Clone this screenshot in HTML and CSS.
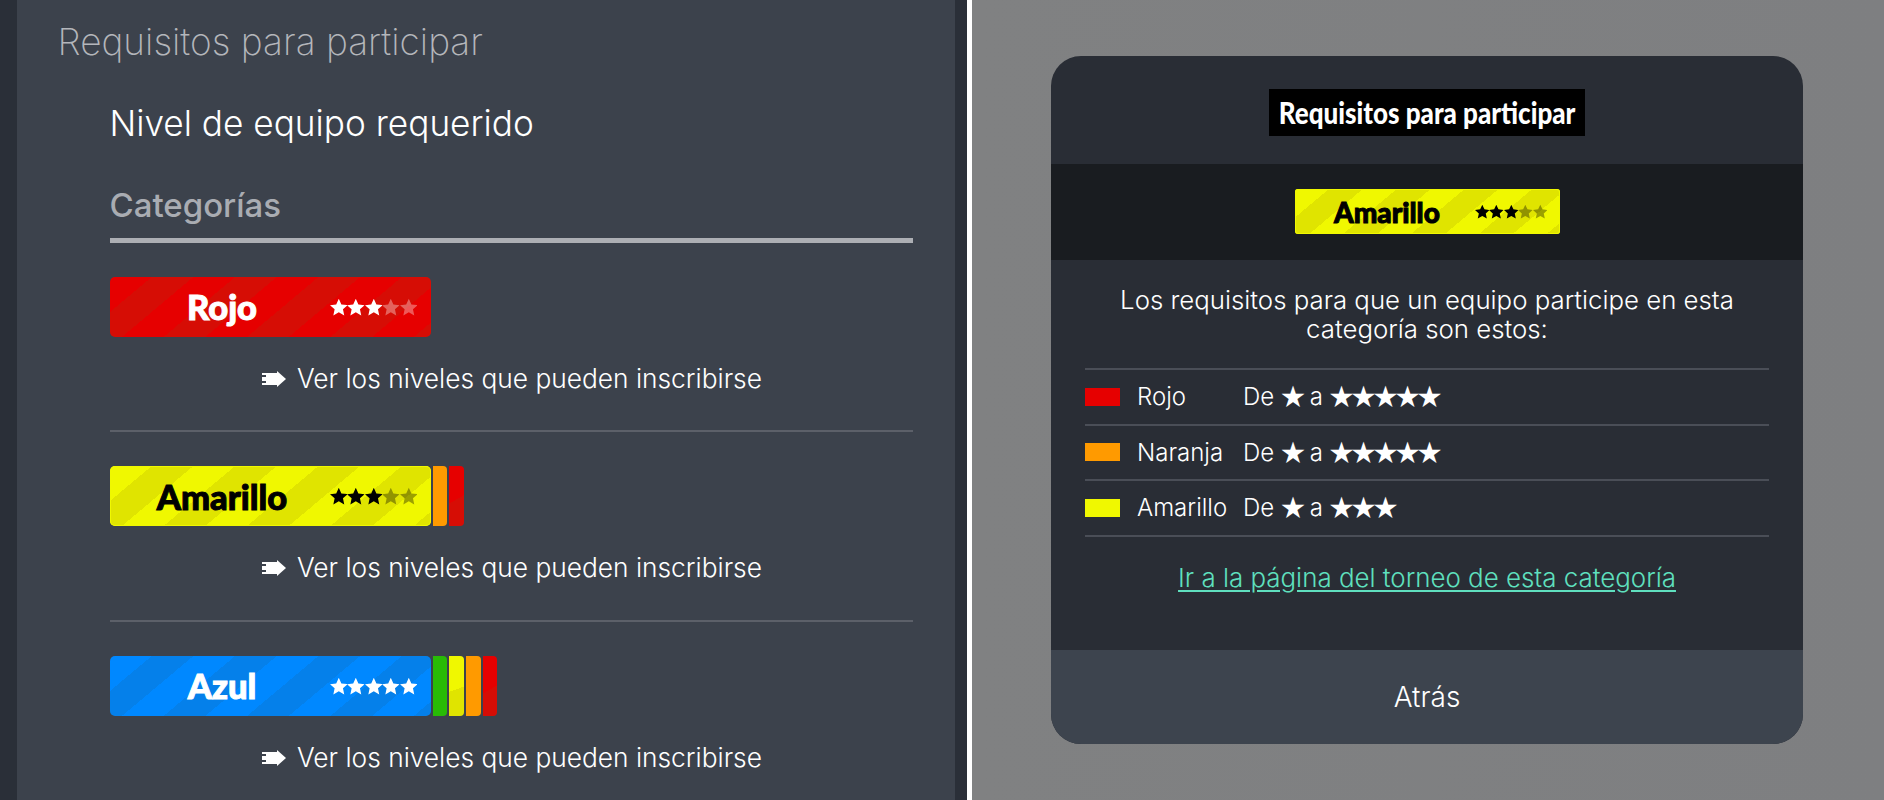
FILE: index.html
```html
<!DOCTYPE html>
<html lang="es">
<head>
<meta charset="utf-8">
<title>Requisitos para participar</title>
<link rel="stylesheet" href="styles.css">
</head>
<body>
<svg class="defs" width="0" height="0" aria-hidden="true">
  <symbol id="star" viewBox="0.5 0 19 19"><path d="M10 .6l2.8 6.1 6.7.8-5 4.5 1.4 6.6L10 15.3l-5.9 3.3 1.4-6.6-5-4.5 6.7-.8z"/></symbol>
  <symbol id="arrow" viewBox="0 0 24 16"><path d="M0 2h15V0l9 8-9 8v-2H0v-2h4v-2H0V6h4V4H0z"/></symbol>
</svg>
<main class="screen">
  <section class="pane">
    <div class="panel">
      <h1 class="page-title">Requisitos para participar</h1>
      <div class="content">
        <h2 class="sub-title">Nivel de equipo requerido</h2>
        <h3 class="cat-title">Categorías</h3>
        <article class="item">
          <div class="badge-row">
            <div class="badge red">
              <span class="badge-name">Rojo</span>
              <span class="stars"><svg><use href="#star"/></svg><svg><use href="#star"/></svg><svg><use href="#star"/></svg><svg class="off"><use href="#star"/></svg><svg class="off"><use href="#star"/></svg></span>
            </div>
          </div>
          <a class="more"><svg class="arrow"><use href="#arrow"/></svg>Ver los niveles que pueden inscribirse</a>
        </article>
        <article class="item">
          <div class="badge-row">
            <div class="badge yellow">
              <span class="badge-name">Amarillo</span>
              <span class="stars"><svg><use href="#star"/></svg><svg><use href="#star"/></svg><svg><use href="#star"/></svg><svg class="off"><use href="#star"/></svg><svg class="off"><use href="#star"/></svg></span>
            </div>
            <i class="stub orange"></i><i class="stub red"></i>
          </div>
          <a class="more"><svg class="arrow"><use href="#arrow"/></svg>Ver los niveles que pueden inscribirse</a>
        </article>
        <article class="item">
          <div class="badge-row">
            <div class="badge blue">
              <span class="badge-name">Azul</span>
              <span class="stars"><svg><use href="#star"/></svg><svg><use href="#star"/></svg><svg><use href="#star"/></svg><svg><use href="#star"/></svg><svg><use href="#star"/></svg></span>
            </div>
            <i class="stub green"></i><i class="stub yellow"></i><i class="stub orange"></i><i class="stub red"></i>
          </div>
          <a class="more"><svg class="arrow"><use href="#arrow"/></svg>Ver los niveles que pueden inscribirse</a>
        </article>
      </div>
    </div>
  </section>
  <section class="overlay">
    <div class="modal">
      <header class="modal-head"><h2 class="modal-title"><span class="title-box"><span class="title-text">Requisitos para participar</span></span></h2></header>
      <div class="modal-band">
        <div class="badge yellow small">
          <span class="badge-name">Amarillo</span>
          <span class="stars"><svg><use href="#star"/></svg><svg><use href="#star"/></svg><svg><use href="#star"/></svg><svg class="off"><use href="#star"/></svg><svg class="off"><use href="#star"/></svg></span>
        </div>
      </div>
      <div class="modal-body">
        <p class="intro">Los requisitos para que un equipo participe en esta<br>categoría son estos:</p>
        <ul class="levels">
          <li><i class="swatch red"></i><span class="lv-name">Rojo</span><span class="lv-range">De <b>★</b> a <b>★★★★★</b></span></li>
          <li><i class="swatch orange"></i><span class="lv-name">Naranja</span><span class="lv-range">De <b>★</b> a <b>★★★★★</b></span></li>
          <li><i class="swatch yellow"></i><span class="lv-name">Amarillo</span><span class="lv-range">De <b>★</b> a <b>★★★</b></span></li>
        </ul>
        <a class="link">Ir a la página del torneo de esta categoría</a>
      </div>
      <footer class="modal-foot">Atrás</footer>
    </div>
  </section>
</main>
</body>
</html>
```
FILE: styles.css
```css
* { box-sizing: border-box; }
html, body { margin: 0; height: 800px; overflow: hidden; }
body { background: #2a2f38; color: #fff; font-family: Inter, "Noto Sans", sans-serif; font-weight: 300; }
h1, h2, h3, p, ul { margin: 0; padding: 0; font-weight: inherit; }
.defs { position: absolute; }
.screen { display: flex; height: 800px; }

.pane { width: 972px; flex: none; padding: 0 12px 0 17px; border-right: 5px solid #fff; }
.panel { background: #3c424c; height: 800px; padding-top: 18px; }
.page-title { padding-left: 40.5px; font-size: 37px; line-height: 48px; font-weight: 200; color: #b4b6bb; }
.content { padding: 0 42px 0 92.5px; }
.sub-title { margin-top: 32px; font-size: 35.2px; line-height: 50px; }
.cat-title { margin-top: 37px; padding-bottom: 13px; border-bottom: 5px solid #adafb4; font-size: 33px; line-height: 40px; font-weight: 500; color: #a9acb2; }

.item { padding: 34px 0 31.7px; border-bottom: 2px solid #5c6069; }
.item:first-of-type { padding-top: 33.5px; }
.badge-row { display: flex; }
.more { display: flex; align-items: center; gap: 11px; margin: 22px 0 0 152.5px; font-size: 26.3px; line-height: 40px; }
.arrow { width: 24px; height: 16px; fill: #fff; }

.badge { display: flex; align-items: center; width: 321px; height: 60px; border-radius: 5px; --light: #fff; --dark: #fff; --w: 26.8px; background: repeating-linear-gradient(140deg, var(--light) 0 var(--w), var(--dark) var(--w) calc(var(--w) * 2)); }
.badge-name { flex: none; width: 220px; padding-left: 5px; text-align: center; font-family: Lato, sans-serif; font-weight: 900; font-size: 34.5px; -webkit-text-stroke: 1px currentColor; }
.stars { display: flex; width: 88px; height: 18px; fill: currentColor; }
.stars svg { width: 17.6px; height: 18px; }
.stars .off { opacity: .35; }
.badge.red { color: #fff; --light: #e60000; --dark: #d60d05; }
.badge.yellow { color: #000; --light: #f0f800; --dark: #e0e400; box-shadow: inset 0 0 0 1px #f0f800; }
.badge.blue { color: #fff; --light: #0088ff; --dark: #0580ea; }

.stub { width: 14.7px; height: 60px; margin-left: 2px; border-radius: 0 4px 4px 0; }
.stub.orange { background: #ff9a00; }
.stub.red { background: linear-gradient(150deg, #e60000 55%, #d60d05 55%); }
.stub.green { background: #28bb06; }
.stub.yellow { background: linear-gradient(160deg, #f0f800 55%, #e0e400 55%); }

.overlay { flex: 1; background: linear-gradient(90deg, #808182 0, #7e7f81 100%); padding: 56px 0 0 79px; }
.modal { width: 752px; height: 688px; border-radius: 30px; overflow: hidden; background: #292d35; display: flex; flex-direction: column; }
.modal-head { height: 108px; padding-top: 33px; }
.modal-title { display: flex; justify-content: center; }
.title-box { display: flex; justify-content: center; width: 316px; height: 47px; line-height: 46px; background: #000; }
.title-text { flex: none; font-family: Lato, sans-serif; font-weight: 900; font-size: 30px; white-space: nowrap; transform: scaleX(.867); }
.modal-band { height: 95.5px; background: #191c20; display: flex; justify-content: center; align-items: center; }
.badge.small { width: 265px; height: 45px; border-radius: 3px; --w: 21.8px; }
.small .badge-name { width: 180px; font-size: 28px; }
.small .stars { width: 73px; height: 15px; }
.small .stars svg { width: 14.6px; height: 15px; }

.modal-body { flex: 1; padding: 25px 34px 0; }
.intro { text-align: center; font-size: 25.8px; line-height: 29px; white-space: nowrap; }
.levels { margin-top: 25.5px; list-style: none; border-top: 2px solid #4a4e57; }
.levels li { display: flex; align-items: center; height: 55.5px; border-bottom: 2px solid #4a4e57; font-size: 24px; }
.swatch { width: 35px; height: 18px; margin-right: 17px; flex: none; }
.swatch.red { background: #e60000; }
.swatch.orange { background: #ff9a00; }
.swatch.yellow { background: #f0f800; }
.lv-name { width: 106px; flex: none; }
.lv-range { margin-top: -4px; }
.lv-range b { font-family: "Noto Sans CJK JP", sans-serif; font-weight: 400; font-size: 24px; letter-spacing: -2px; }
.link { display: block; margin-top: 23px; text-align: center; font-size: 25.9px; line-height: 36px; color: #5fe0bf; text-decoration: underline; text-underline-offset: 3px; }
.modal-foot { height: 94px; display: flex; align-items: center; justify-content: center; background: #3d444e; font-size: 28px; }
```
